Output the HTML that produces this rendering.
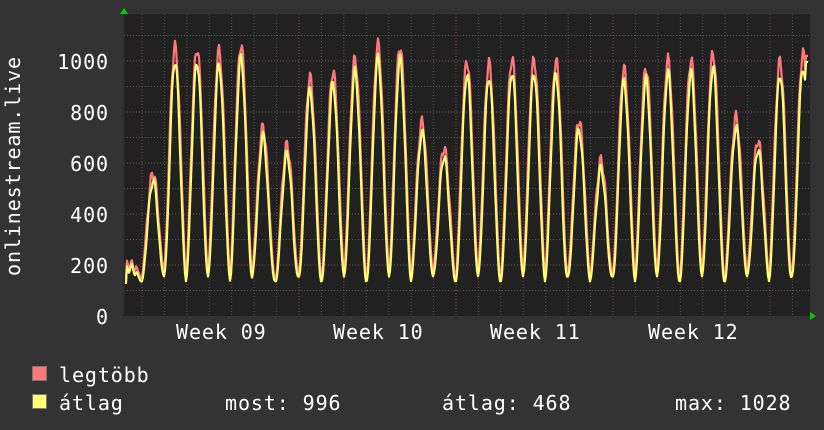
<!DOCTYPE html>
<html><head><meta charset="utf-8"><style>
html,body{margin:0;padding:0;background:#333;}
body{width:824px;height:430px;overflow:hidden;position:relative;font-family:"DejaVu Sans Mono","Liberation Mono",monospace;color:#fff;}
.t{position:absolute;font-size:20px;letter-spacing:0.9px;white-space:pre;line-height:1;}
.sq{position:absolute;width:13px;height:13px;border:1px solid #777;}
</style></head><body>
<svg id="g" width="824" height="430" style="position:absolute;left:0;top:0">
<rect x="124" y="14" width="686" height="302" fill="#212121"/>
<g id="grid"></g>
<polyline id="mx" fill="none" stroke="#ff7777" stroke-width="2.2" stroke-linejoin="round"/>
<polyline id="av" fill="none" stroke="#ffff77" stroke-width="2.2" stroke-linejoin="round"/>
<polygon points="120,14 128,14 124,8" fill="#0c0"/>
<polygon points="810,312 810,320 816,316" fill="#0c0"/>
<line x1="124" y1="14" x2="124" y2="318" stroke="#2a2a2a"/>
</svg>
<div class="t" style="transform-origin:0 0;transform:rotate(-90deg);top:276px;left:3px;width:230px">onlinestream.live</div>
<div class="t" style="right:715px;top:52px">1000</div>
<div class="t" style="right:715px;top:103px">800</div>
<div class="t" style="right:715px;top:154px">600</div>
<div class="t" style="right:715px;top:205px">400</div>
<div class="t" style="right:715px;top:256px">200</div>
<div class="t" style="right:715px;top:307px">0</div>
<div class="t" style="left:176px;top:322px">Week 09</div>
<div class="t" style="left:333px;top:322px">Week 10</div>
<div class="t" style="left:490px;top:322px">Week 11</div>
<div class="t" style="left:648px;top:322px">Week 12</div>
<div class="sq" style="left:32px;top:366px;background:#ff7777"></div>
<div class="sq" style="left:32px;top:394px;background:#ffff77"></div>
<div class="t" style="left:59px;top:365px">legtöbb</div>
<div class="t" style="left:59px;top:393px">átlag</div>
<div class="t" style="left:225px;top:393px">most: 996</div>
<div class="t" style="left:442px;top:393px">átlag: 468</div>
<div class="t" style="left:675px;top:393px">max: 1028</div>
<script>
var NS="http://www.w3.org/2000/svg",grid=document.getElementById("grid");
function ln(x1,y1,x2,y2,c){var l=document.createElementNS(NS,"line");l.setAttribute("x1",x1);l.setAttribute("y1",y1);l.setAttribute("x2",x2);l.setAttribute("y2",y2);l.setAttribute("stroke",c);l.setAttribute("stroke-dasharray","1,2");grid.appendChild(l);}
function Y(v){return 316-v*0.255;}
for(var v=100;v<=1100;v+=100){ln(124,Y(v),810,Y(v),v%200==0?"#7a4a4a":"#555");}
for(var d=-3;d<40;d++){var x=142+d*157/7;if(x<=124||x>=810)continue;ln(x,14,x,316,d%7==0?"#7a4a4a":"#555");}
var pk=[[130,200],[153,560],[175,1055],[197,1050],[219,1040],[241,1065],[263,740],[287,670],[310,935],[333,960],[355,1010],[378,1065],[400,1060],[422,760],[444,660],[467,1000],[489,990],[512,1010],[534,1005],[556,1000],[579,770],[601,610],[624,970],[646,975],[668,1005],[691,1005],[713,1030],[736,780],[758,690],[780,1000],[803,1030]];
var mx=[],av=[];
for(var x=125;x<=808;x++){
 var best=pk[0],bd=1e9;for(var i=0;i<pk.length;i++){var dd=Math.abs(x-pk[i][0]);if(dd<bd){bd=dd;best=pk[i];}}
 var dx=x-best[0];
 var w=Math.max(0,Math.cos(Math.min(Math.abs(dx)/11.2,1)*Math.PI/2));
 var base=160+10*Math.sin(x*0.7);
 var h=best[1];
 var shape=Math.pow(w,1.6);
 var m=base+(h-base)*shape+ (shape>0.3?25*Math.sin(x*1.3)*shape:0);
 var a=base-15+(h*0.95-base+15)*Math.pow(w,1.9)+ (shape>0.3?20*Math.sin(x*1.1+1)*shape:0);
 if(x<=126){m=150;a=130;}
 if(x>=806){m=1020;a=996;}
 mx.push(x+","+Y(m).toFixed(1));av.push(x+","+Y(a).toFixed(1));
}
document.getElementById("mx").setAttribute("points",mx.join(" "));
document.getElementById("av").setAttribute("points",av.join(" "));
</script>
</body></html>
